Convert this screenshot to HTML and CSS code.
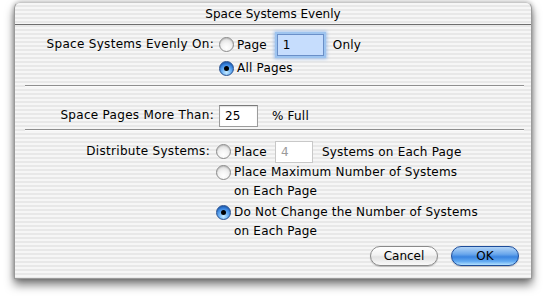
FILE: index.html
```html
<!DOCTYPE html>
<html lang="en">
<head>
    <meta charset="UTF-8">
    <title>Space Systems Evenly</title>
    <link rel="stylesheet" href="styles.css">
</head>
<body>
    <div class="window">
        <div class="title-bar">Space Systems Evenly</div>

        <div class="content">
            <!-- Which pages -->
            <div class="section section-pages">
                <div class="label">Space Systems Evenly On:</div>
                <div class="options">
                    <div class="option row-input">
                        <span class="radio"></span>
                        <span class="opt-text">Page</span>
                        <span class="field field-focus">1</span>
                        <span class="after">Only</span>
                    </div>
                    <div class="option row-all">
                        <span class="radio checked"></span>
                        <span class="opt-text">All Pages</span>
                    </div>
                </div>
            </div>

            <div class="separator"></div>

            <!-- Fullness -->
            <div class="section section-full">
                <div class="label">Space Pages More Than:</div>
                <div class="options">
                    <div class="option row-input">
                        <span class="field field-full">25</span>
                        <span class="after after-full">% Full</span>
                    </div>
                </div>
            </div>

            <div class="separator sep-2"></div>

            <!-- Distribution -->
            <div class="section section-dist">
                <div class="label">Distribute Systems:</div>
                <div class="options">
                    <div class="option row-input">
                        <span class="radio"></span>
                        <span class="opt-text">Place</span>
                        <span class="field field-disabled">4</span>
                        <span class="after">Systems on Each Page</span>
                    </div>
                    <div class="option row-wrap">
                        <span class="radio"></span>
                        <span class="opt-text">Place Maximum Number of Systems<br>on Each Page</span>
                    </div>
                    <div class="option row-wrap row-last">
                        <span class="radio checked"></span>
                        <span class="opt-text">Do Not Change the Number of Systems<br>on Each Page</span>
                    </div>
                </div>
            </div>

            <div class="buttons">
                <button class="btn">Cancel</button>
                <button class="btn btn-default">OK</button>
            </div>
        </div>
    </div>
</body>
</html>
```

FILE: styles.css
```css
* {
    margin: 0;
    padding: 0;
    box-sizing: border-box;
    font-family: 'DejaVu Sans', 'Liberation Sans', sans-serif;
}

body {
    background-color: #fff;
    color: #000;
    font-size: 12px;
    width: 546px;
    height: 303px;
    overflow: hidden;
}

/* Aqua sheet window */
.window {
    margin: 2px 0 0 14px;
    width: 518px;
    height: 277px;
    border: 1px solid #9a9a9a;
    border-top-color: #c8c8c8;
    border-radius: 6px 6px 0 0;
    background: repeating-linear-gradient(to bottom, #f6f6f6 0, #f6f6f6 2px, #e8e8e8 2px, #e8e8e8 4px);
    box-shadow: 0 6px 10px rgba(0, 0, 0, 0.5), 0 0 5px rgba(0, 0, 0, 0.3);
    display: flex;
    flex-direction: column;
}

.title-bar {
    height: 22px;
    line-height: 22px;
    text-align: center;
    border-bottom: 1px solid #6e6e6e;
    flex-shrink: 0;
}

.content {
    flex: 1;
    display: flex;
    flex-direction: column;
    letter-spacing: 0.2px;
}

.section {
    display: flex;
    align-items: flex-start;
}

.label {
    text-align: right;
    white-space: nowrap;
    height: 23px;
    line-height: 23px;
    letter-spacing: 0.3px;
}

.section-pages {
    padding-top: 8px;
}

.section-pages .label,
.section-full .label {
    width: 199px;
    margin-right: 5px;
}

.section-full {
    padding-top: 17px;
}

.section-dist {
    padding-top: 9px;
}

.section-dist .label {
    width: 195px;
    margin-right: 6px;
}

.options {
    display: flex;
    flex-direction: column;
}

.option {
    display: flex;
    align-items: flex-start;
}

.row-input {
    height: 23px;
    align-items: center;
}

.row-all {
    margin-top: 4px;
    height: 16px;
    align-items: center;
}

.row-wrap {
    line-height: 19px;
}

.row-last {
    margin-top: 2px;
}

.row-wrap .radio {
    margin-top: 2px;
}

.opt-text {
    margin-left: 3px;
}

.after {
    margin-left: 9px;
}

.after-full {
    margin-left: 14px;
}

/* Radio buttons */
.radio {
    width: 15px;
    height: 15px;
    border-radius: 50%;
    border: 1px solid #8a8a8a;
    background: radial-gradient(circle at 50% 75%, #ffffff 0, #f4f4f4 40%, #d2d2d2 100%);
    box-shadow: inset 0 1px 1px rgba(0, 0, 0, 0.15);
    flex-shrink: 0;
    position: relative;
}

.radio.checked {
    border-color: #27508f;
    background: radial-gradient(circle at 50% 80%, #c8ecff 0, #6fb3f5 35%, #2f7ad8 70%, #1f5cb5 100%);
}

.radio.checked::after {
    content: "";
    position: absolute;
    left: 4px;
    top: 4px;
    width: 5px;
    height: 5px;
    border-radius: 50%;
    background-color: #000;
}

/* Text fields */
.field {
    height: 22px;
    line-height: 20px;
    padding-left: 5px;
    border: 1px solid #9c9c9c;
    border-top-color: #7a7a7a;
    background-color: #fff;
    box-shadow: inset 0 1px 1px rgba(0, 0, 0, 0.12);
}

.field-focus {
    width: 47px;
    margin-left: 10px;
    background-color: #c6ddfd;
    border-color: #6a8fc8;
    box-shadow: 0 0 0 2px #9ec4ef, 0 0 3px 3px rgba(90, 150, 230, 0.5);
}

.field-full {
    width: 39px;
}

.field-disabled {
    width: 38px;
    margin-left: 8px;
    color: #9a9a9a;
    border-color: #c8c8c8;
    box-shadow: none;
}

/* Group separators */
.separator {
    height: 2px;
    margin: 9px 7px 0 10px;
    border-top: 1px solid #8e8e8e;
    border-bottom: 1px solid #fafafa;
}

.sep-2 {
    margin-top: 2px;
}

/* Push buttons */
.buttons {
    display: flex;
    justify-content: flex-end;
    gap: 13px;
    padding: 5px 12px 0 0;
}

.btn {
    width: 68px;
    height: 20px;
    border-radius: 10px;
    font-size: 12px;
    letter-spacing: 0;
    color: #000;
    border: 1px solid #8a8a8a;
    background: linear-gradient(to bottom, #ffffff 0, #f2f2f2 45%, #e2e2e2 55%, #fafafa 100%);
    box-shadow: 0 1px 1px rgba(0, 0, 0, 0.2);
}

.btn-default {
    border-color: #1d4c9a;
    background: linear-gradient(to bottom, #b2d4f7 0, #6aa7ec 40%, #3a84e0 55%, #62aaf2 80%, #b4e2ff 100%);
}
```
